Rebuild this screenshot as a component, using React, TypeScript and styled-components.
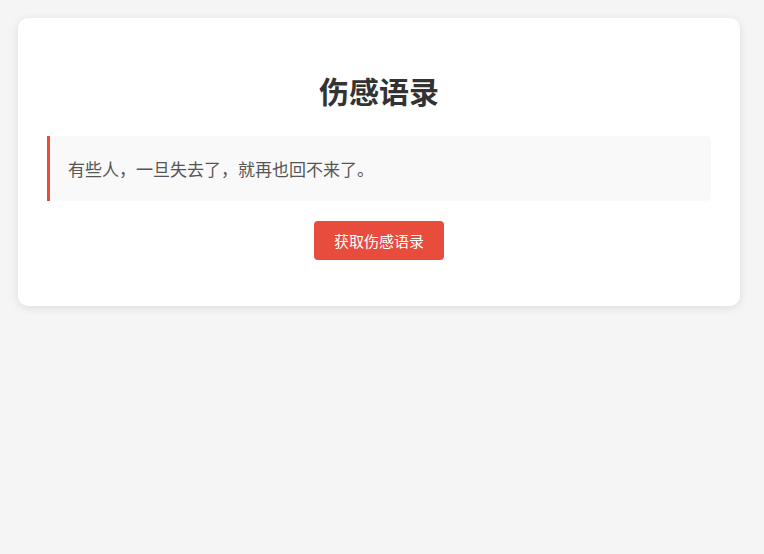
import styled, { createGlobalStyle } from 'styled-components';

const GlobalStyle = createGlobalStyle`
  html, body {
    margin: 0;
    padding: 0;
    background: #f5f5f5;
    font-family: "Noto Sans CJK SC", "Noto Sans", sans-serif;
  }
`;

const Page = styled.div`
  padding: 18px 24px 18px 18px;
`;

const Card = styled.div`
  background: #fff;
  border-radius: 10px;
  box-shadow: 0 2px 10px rgba(0, 0, 0, 0.1);
  padding: 30px 29px 46px;
  display: flex;
  flex-direction: column;
  align-items: center;
`;

const Title = styled.h1`
  margin: 20px 0 24px;
  font-size: 30px;
  line-height: 44px;
  font-weight: 700;
  color: #333;
`;

const Quote = styled.div`
  align-self: stretch;
  background: #f9f9f9;
  border-left: 3px solid #e74c3c;
  border-radius: 0 5px 5px 0;
  padding: 20px 18px;
  font-size: 17px;
  line-height: 25px;
  color: #555;
`;

const Button = styled.button`
  margin-top: 20px;
  background: #e74c3c;
  color: #fff;
  border: none;
  border-radius: 4px;
  padding: 10px 20px;
  font-family: inherit;
  font-size: 15px;
  line-height: 19px;
  cursor: pointer;
`;

const App = (): JSX.Element => {
  return (
    <>
      <GlobalStyle />
      <Page>
        <Card>
          <Title>伤感语录</Title>
          <Quote>有些人，一旦失去了，就再也回不来了。</Quote>
          <Button>获取伤感语录</Button>
        </Card>
      </Page>
    </>
  );
};

export default App;
